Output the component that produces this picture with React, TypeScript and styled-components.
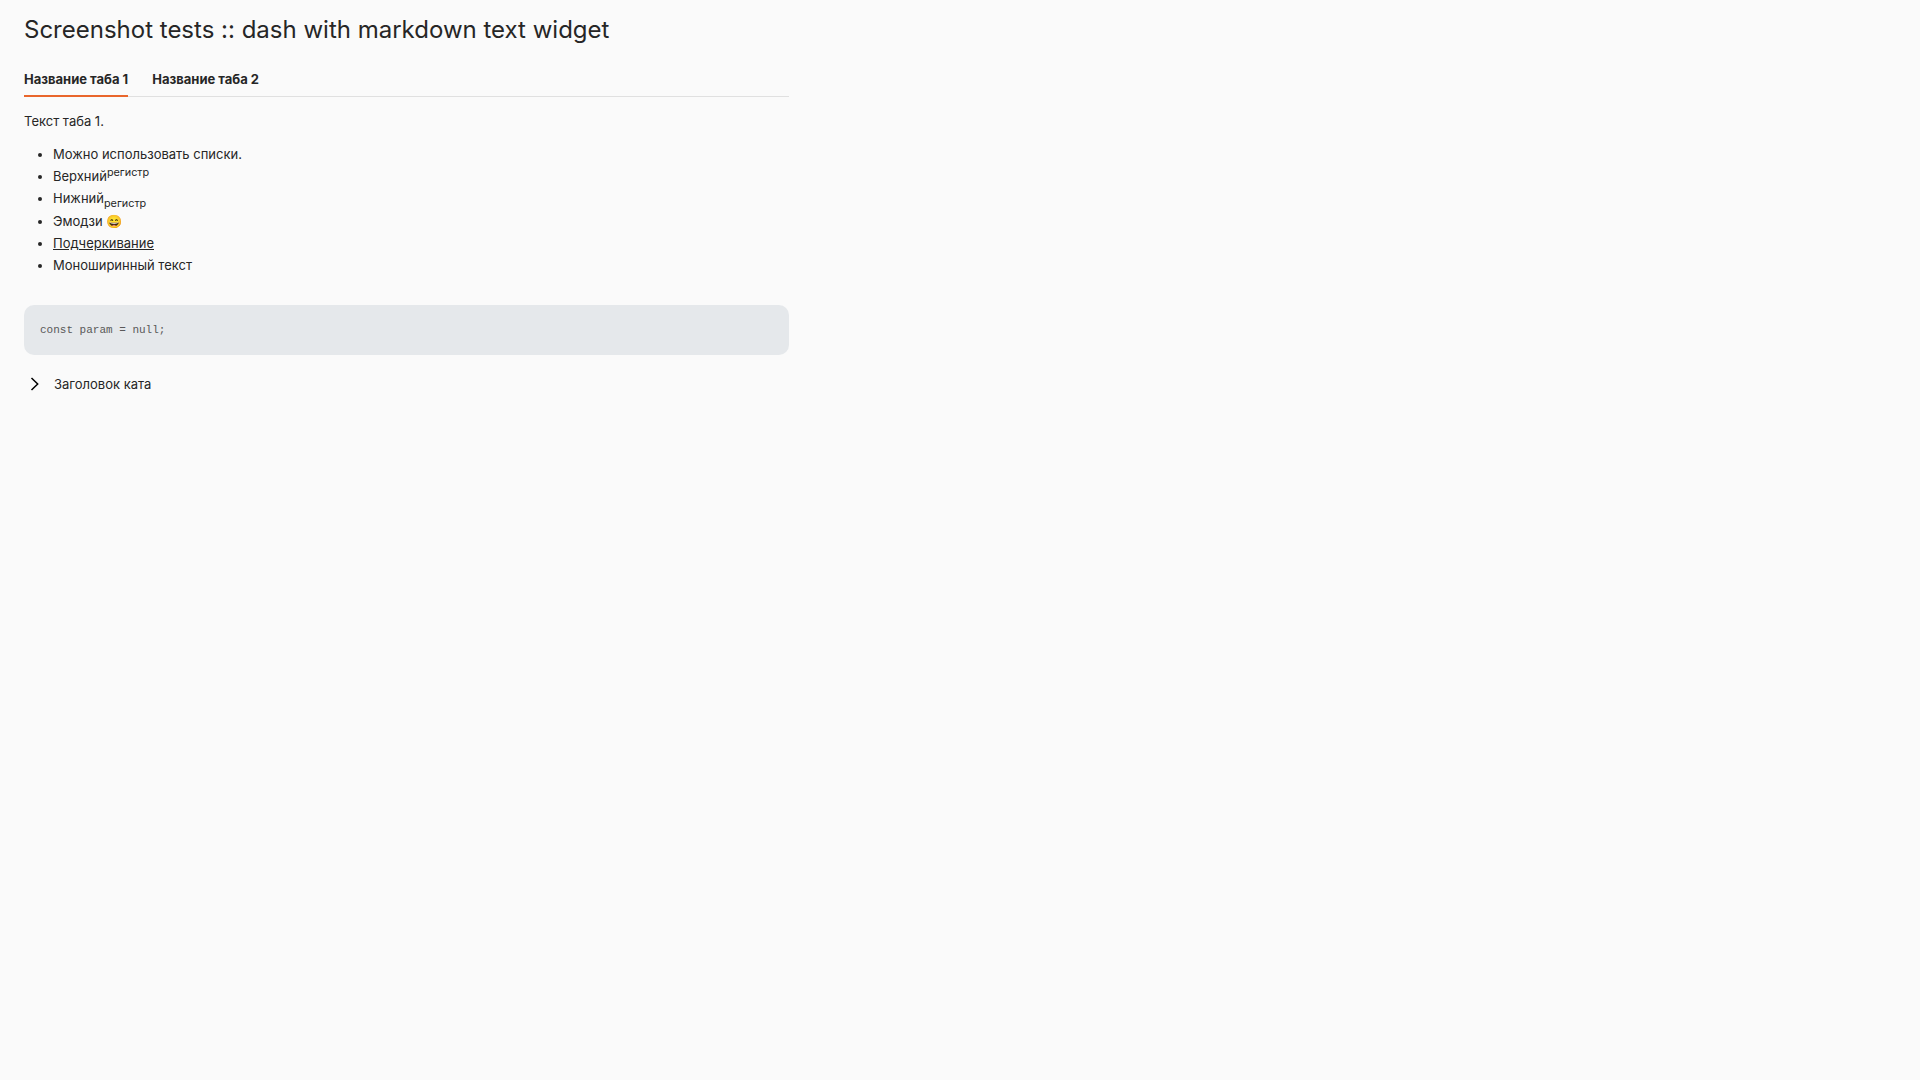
import React, { useState } from "react";
import styled, { createGlobalStyle } from "styled-components";

const GlobalStyle = createGlobalStyle`
  *, *::before, *::after { box-sizing: border-box; }
  body {
    margin: 0;
    background: #fafafa;
    color: #262626;
    font-family: Inter, "Liberation Sans", sans-serif;
    font-size: 13px;
    line-height: 18px;
  }
`;

const Page = styled.main`
  padding: 12px 24px;
`;

const Title = styled.h1`
  margin: 0;
  font-size: 24px;
  line-height: 36px;
  font-weight: 400;
`;

const Widget = styled.section`
  width: 100%;
  max-width: 765px;
  margin-top: 16px;
`;

const TabList = styled.div`
  display: flex;
  gap: 24px;
  box-shadow: inset 0 -1px 0 #e0e0e0;
`;

const Tab = styled.button<{ $active: boolean }>`
  height: 33px;
  padding: 0 0 2px;
  border: 0;
  border-bottom: 2px solid ${(p) => (p.$active ? "#e9662c" : "transparent")};
  background: none;
  color: inherit;
  font: inherit;
  font-weight: 700;
  cursor: pointer;
`;

const Panel = styled.div`
  padding-top: 15px;
`;

const Paragraph = styled.p`
  margin: 0 0 13px;
`;

const List = styled.ul`
  margin: 0 0 29px;
  padding-left: 29px;
  line-height: 22px;

  sup,
  sub {
    line-height: 12px;
  }
`;

const Mono = styled.code`
  font-family: inherit;
`;

const CodeBlock = styled.pre`
  margin: 0 0 19px;
  padding: 16px;
  border-radius: 10px;
  background: #e5e8eb;
  color: #595959;
  font-size: 11px;
  line-height: 18px;
  overflow-x: auto;

  &,
  code {
    font-family: "Liberation Mono", monospace;
  }
`;

const CutTitle = styled.summary`
  display: flex;
  align-items: center;
  gap: 10px;
  list-style: none;
  cursor: pointer;
`;

const Chevron = styled.svg`
  width: 20px;
  height: 20px;
  color: #000;
`;

const tabs = ["Название таба 1", "Название таба 2"];

export default function App() {
  const [active, setActive] = useState(0);
  return (
    <Page>
      <GlobalStyle />
      <Title>Screenshot tests :: dash with markdown text widget</Title>
      <Widget>
        <TabList role="tablist">
          {tabs.map((name, i) => (
            <Tab
              key={name}
              type="button"
              role="tab"
              aria-selected={i === active}
              $active={i === active}
              onClick={() => setActive(i)}
            >
              {name}
            </Tab>
          ))}
        </TabList>
        <Panel role="tabpanel">
          <Paragraph>Текст таба 1.</Paragraph>
          <List>
            <li>Можно использовать списки.</li>
            <li>Верхний<sup>регистр</sup></li>
            <li>Нижний<sub>регистр</sub></li>
            <li>Эмодзи 😄</li>
            <li><u>Подчеркивание</u></li>
            <li><Mono>Моноширинный текст</Mono></li>
          </List>
          <CodeBlock><code>const param = null;</code></CodeBlock>
          <details>
            <CutTitle>
              <Chevron viewBox="0 0 20 20" fill="none" stroke="currentColor" strokeWidth="1.5" aria-hidden="true">
                <path d="M7.5 4l6.2 6-6.2 6" />
              </Chevron>
              Заголовок ката
            </CutTitle>
          </details>
        </Panel>
      </Widget>
    </Page>
  );
}
